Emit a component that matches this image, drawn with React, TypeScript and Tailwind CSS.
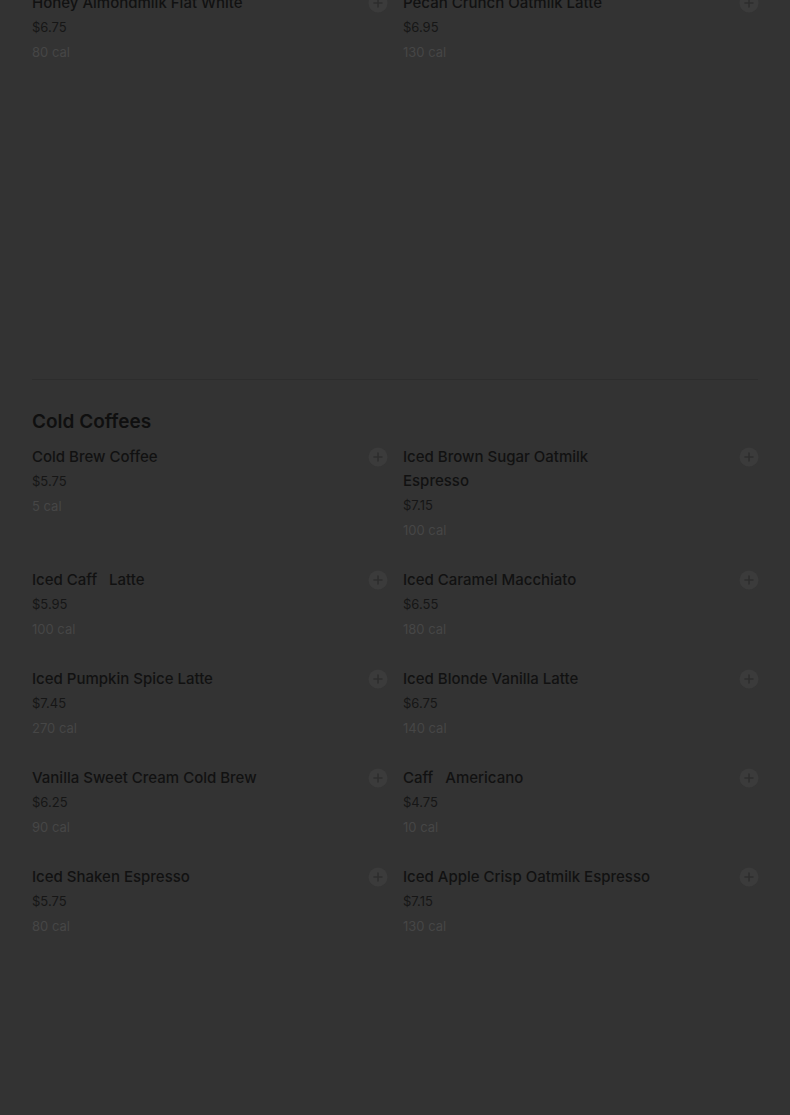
const topItems = [
  { name: "Honey Almondmilk Flat White", price: "$6.75", cal: "80 cal" },
  { name: "Pecan Crunch Oatmilk Latte", price: "$6.95", cal: "130 cal" },
];

const coldCoffees = [
  { name: "Cold Brew Coffee", price: "$5.75", cal: "5 cal" },
  { name: "Iced Brown Sugar Oatmilk Espresso", price: "$7.15", cal: "100 cal" },
  { name: "Iced Caff\u00a0\u00a0\u00a0Latte", price: "$5.95", cal: "100 cal" },
  { name: "Iced Caramel Macchiato", price: "$6.55", cal: "180 cal" },
  { name: "Iced Pumpkin Spice Latte", price: "$7.45", cal: "270 cal" },
  { name: "Iced Blonde Vanilla Latte", price: "$6.75", cal: "140 cal" },
  { name: "Vanilla Sweet Cream Cold Brew", price: "$6.25", cal: "90 cal" },
  { name: "Caff\u00a0\u00a0\u00a0Americano", price: "$4.75", cal: "10 cal" },
  { name: "Iced Shaken Espresso", price: "$5.75", cal: "80 cal" },
  { name: "Iced Apple Crisp Oatmilk Espresso", price: "$7.15", cal: "130 cal" },
];

function AddIcon() {
  return (
    <svg width="20" height="20" viewBox="0 0 20 20" className="shrink-0">
      <circle cx="10" cy="10" r="9.5" fill="#3b3b3b" />
      <path d="M10 6v8M6 10h8" stroke="#2e2e2e" strokeWidth="1.6" strokeLinecap="round" />
    </svg>
  );
}

function MenuItem({ item }: { item: { name: string; price: string; cal: string } }) {
  return (
    <div className="flex items-start justify-between gap-4">
      <div className="max-w-[250px]">
        <p className="text-[15px] font-medium leading-6 text-[#111111]">{item.name}</p>
        <p className="text-[13px] leading-6 text-[#161616]">{item.price}</p>
        <p className="mt-px text-[13px] leading-6 text-[#464646]">{item.cal}</p>
      </div>
      <div className="mt-[2px] -mr-px">
        <AddIcon />
      </div>
    </div>
  );
}

export default function App() {
  return (
    <div className="h-[1115px] overflow-hidden bg-[#333333] px-8 font-['Inter',sans-serif]">
      <div className="-mt-[9px] grid grid-cols-2 gap-x-4">
        {topItems.map((item) => (
          <MenuItem key={item.name} item={item} />
        ))}
      </div>
      <div className="mt-[315px] h-px bg-[#2d2d2d]" />
      <section className="mt-[28px]">
        <h2 className="text-[19px] font-semibold leading-7 text-[#0f0f0f]">Cold Coffees</h2>
        <div className="mt-[9px] grid grid-cols-2 gap-x-4 gap-y-[26px]">
          {coldCoffees.map((item) => (
            <MenuItem key={item.name} item={item} />
          ))}
        </div>
      </section>
    </div>
  );
}
